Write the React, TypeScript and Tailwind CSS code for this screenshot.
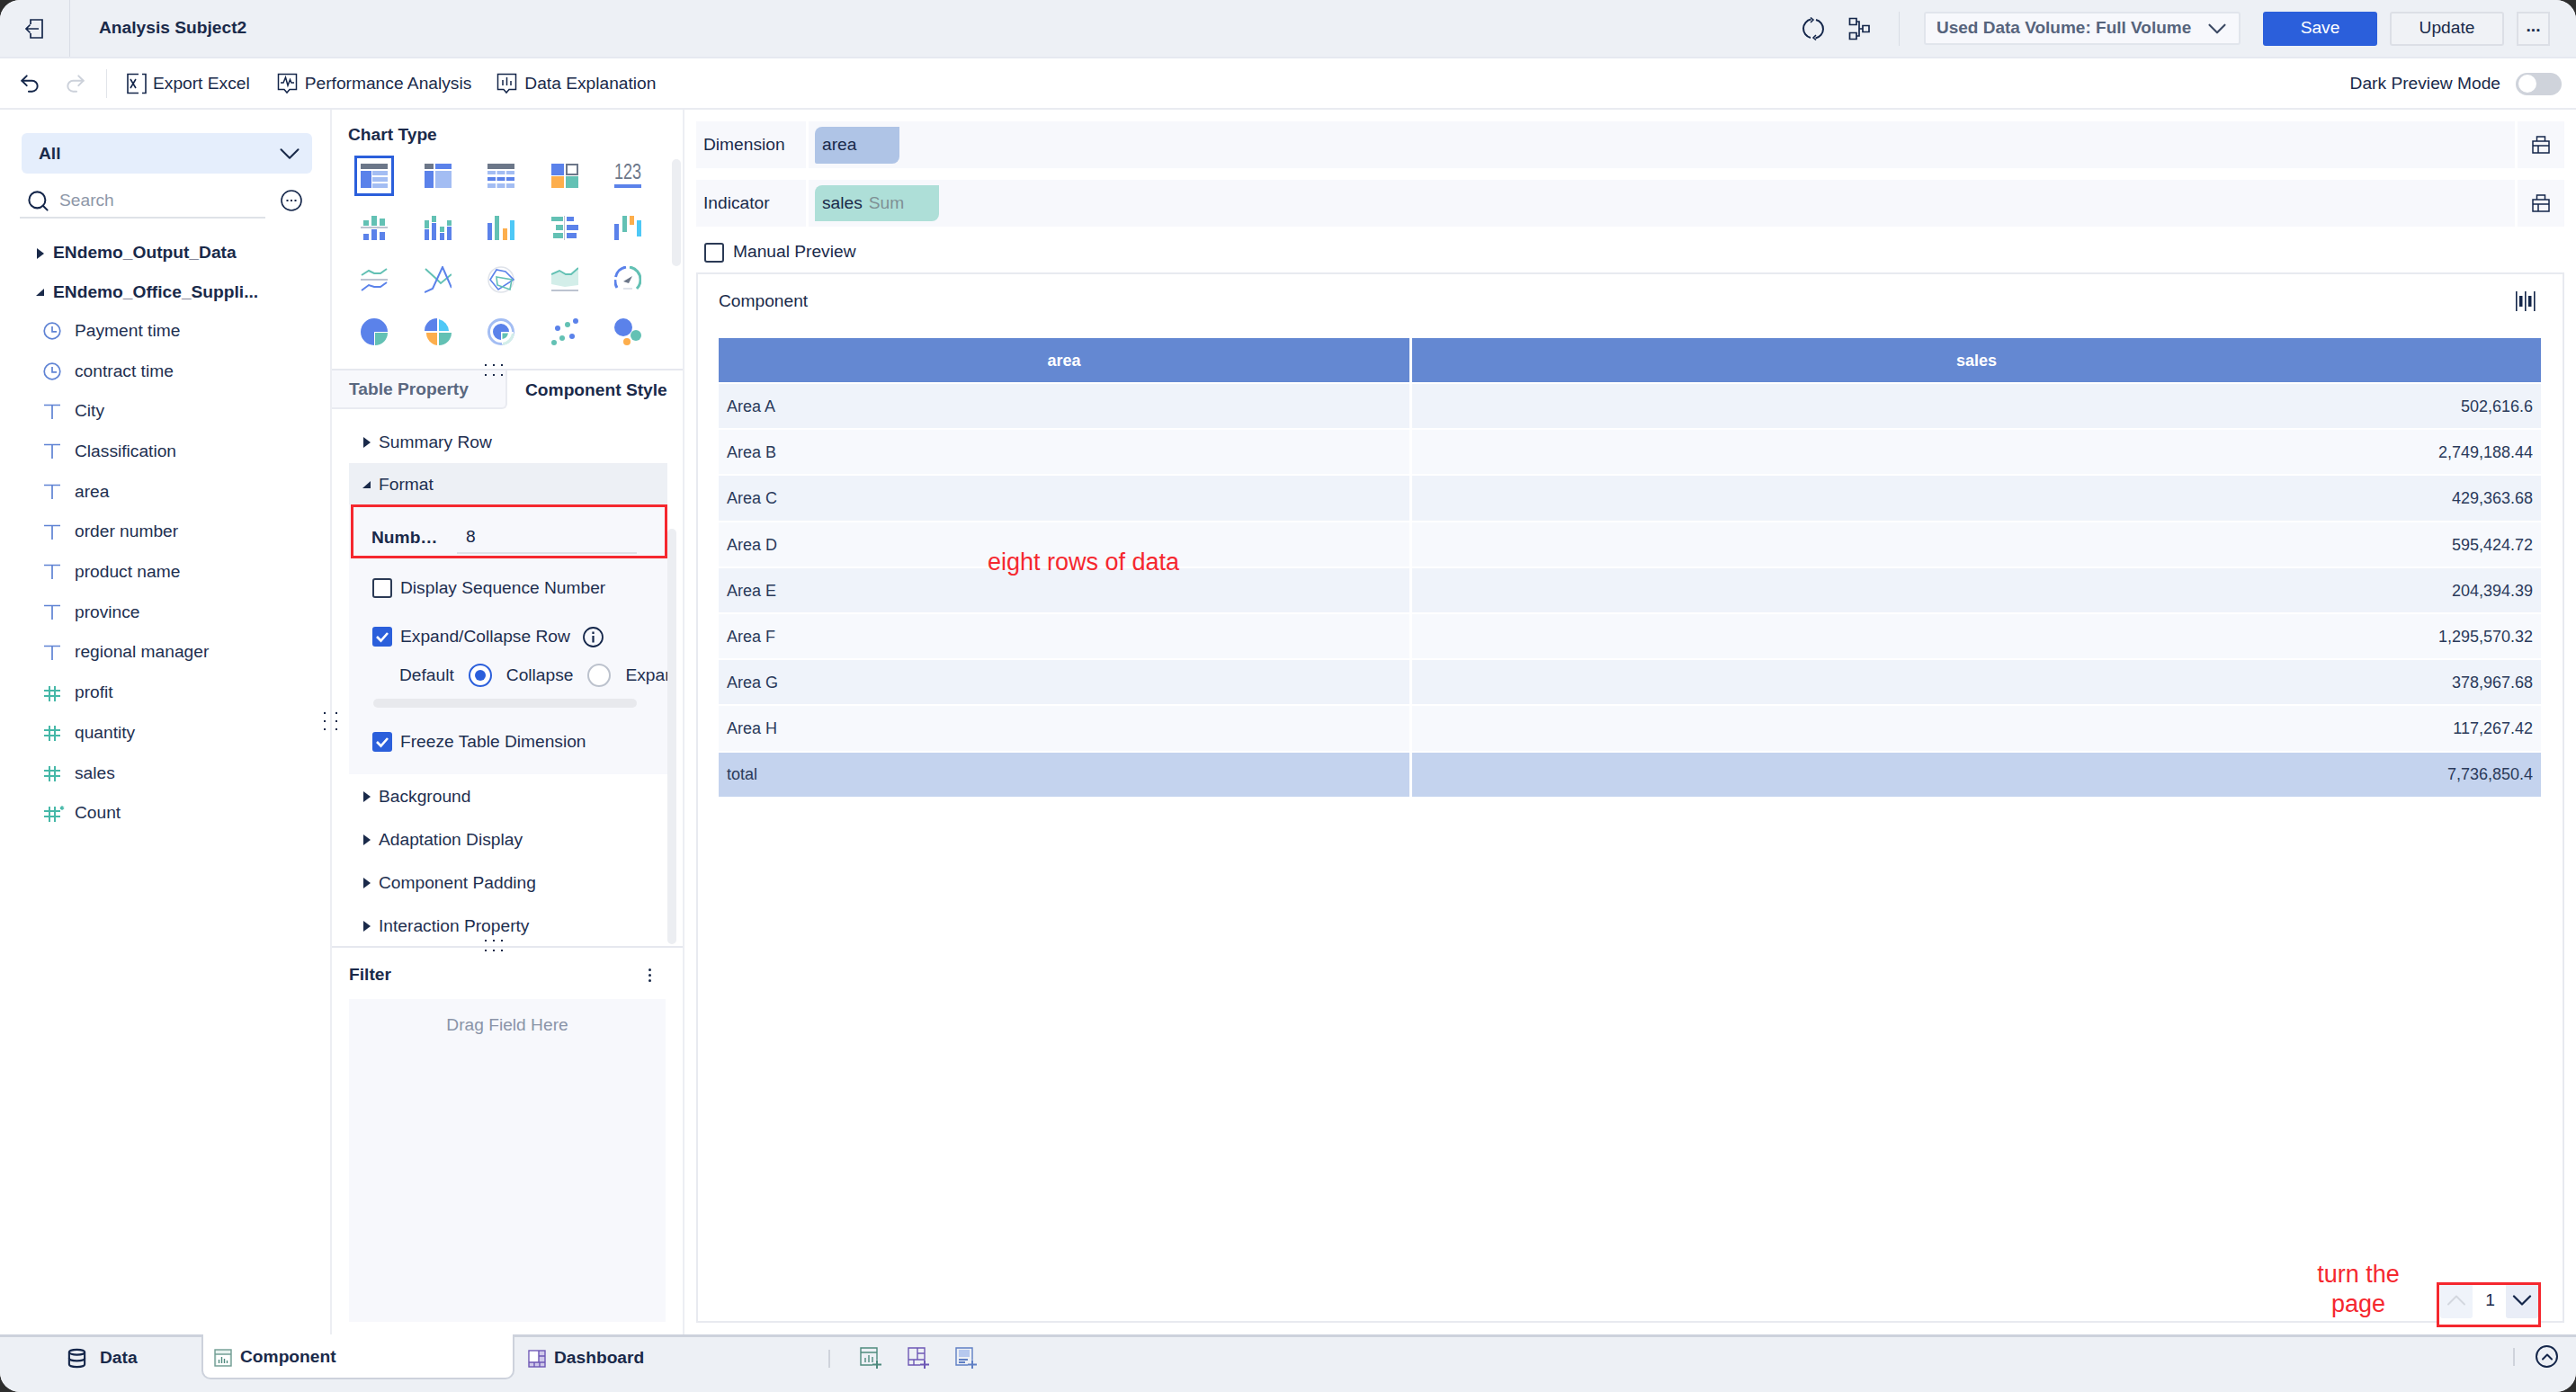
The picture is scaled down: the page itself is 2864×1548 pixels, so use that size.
import { ChevronDown, ChevronUp, Database, Search, Undo2, Redo2 } from "lucide-react";
import type { ReactNode } from "react";

const BLUE = "#5b82ea";
const LIGHT = "#a3bdf3";
const GREY = "#6c7789";
const TEAL = "#63c1b4";
const ORANGE = "#fdae4c";
const CYAN = "#4ec8f6";
const PALE = "#d3eee9";
const LINE = "#bcc3d0";

type R = [number, number, number, number, string];

function Bars({ rects }: { rects: R[] }) {
  return (
    <svg width="30" height="27" viewBox="0 0 30 27">
      {rects.map(([x, y, w, h, c], i) => (
        <rect key={i} x={x} y={y} width={w} height={h} fill={c} />
      ))}
    </svg>
  );
}

function Shape({ children }: { children: ReactNode }) {
  return (
    <svg width="30" height="30" viewBox="0 0 30 30" fill="none">
      {children}
    </svg>
  );
}

const chartIcons: ReactNode[] = [
  <Bars rects={[[0, 0, 30, 6, GREY], [0, 8, 12, 19, BLUE], [13, 8, 17, 5, LIGHT], [13, 15, 17, 5, LIGHT], [13, 22, 17, 5, LIGHT]]} />,
  <Bars rects={[[0, 0, 10, 6, GREY], [12, 0, 18, 6, BLUE], [0, 8, 10, 19, BLUE], [12, 8, 18, 19, LIGHT]]} />,
  <Bars rects={[[0, 0, 30, 6, GREY], [0, 8, 9, 4, LIGHT], [10.5, 8, 9, 4, LIGHT], [21, 8, 9, 4, LIGHT], [0, 15, 9, 4, BLUE], [10.5, 15, 9, 4, BLUE], [21, 15, 9, 4, BLUE], [0, 22, 9, 5, LIGHT], [10.5, 22, 9, 5, LIGHT], [21, 22, 9, 5, LIGHT]]} />,
  <svg width="30" height="27" viewBox="0 0 30 27">
    <rect width="14" height="13" fill={BLUE} />
    <rect x="17" y="1" width="12" height="11" fill="none" stroke={GREY} strokeWidth="2" />
    <rect y="14" width="14" height="13" fill={ORANGE} />
    <rect x="16" y="14" width="14" height="13" fill={TEAL} />
  </svg>,
  <svg width="30" height="27" viewBox="0 0 30 27">
    <text x="0" y="17" fontSize="23" textLength="30" lengthAdjust="spacingAndGlyphs" fontFamily="Liberation Sans, sans-serif" fill={GREY}>
      123
    </text>
    <rect y="23" width="30" height="4" fill={BLUE} />
  </svg>,
  <Bars rects={[[3, 5, 6, 6, TEAL], [12, 0, 6, 11, TEAL], [21, 3, 6, 8, TEAL], [0, 12, 30, 2, LINE], [3, 20, 6, 7, BLUE], [12, 15, 6, 12, BLUE], [21, 18, 6, 9, BLUE]]} />,
  <Bars rects={[[0, 5, 5, 9, TEAL], [0, 15, 5, 12, BLUE], [8, 0, 5, 7, TEAL], [8, 8, 5, 19, BLUE], [17, 12, 5, 6, TEAL], [17, 19, 5, 8, BLUE], [25, 5, 5, 6, TEAL], [25, 12, 5, 15, BLUE]]} />,
  <Bars rects={[[0, 8, 5, 19, BLUE], [8, 0, 5, 27, TEAL], [17, 14, 5, 13, ORANGE], [25, 5, 5, 22, CYAN]]} />,
  <Bars rects={[[0, 1, 13, 5, TEAL], [5, 10, 8, 6, TEAL], [2, 19, 11, 6, TEAL], [14, 0, 1, 27, LINE], [17, 1, 8, 5, BLUE], [17, 10, 13, 6, BLUE], [17, 19, 11, 6, BLUE]]} />,
  <Bars rects={[[0, 9, 5, 18, BLUE], [9, 0, 5, 18, TEAL], [17, 0, 5, 10, ORANGE], [25, 5, 5, 18, CYAN]]} />,
  <Shape>
    <path d="M1 10 L9 5 L15 8 L22 8 L29 3" stroke={TEAL} strokeWidth="2" />
    <rect y="14" width="30" height="2" fill={LINE} />
    <path d="M1 27 L9 21 L15 23 L22 23 L29 18" stroke={BLUE} strokeWidth="2" />
  </Shape>,
  <Shape>
    <path d="M1 3 L13 14 L18 19 L30 9" stroke={TEAL} strokeWidth="2" />
    <path d="M0 29 L9 25 L20 1 L30 24" stroke={BLUE} strokeWidth="2" />
  </Shape>,
  <Shape>
    <circle cx="15" cy="15" r="14" stroke="#dfe3ea" strokeWidth="1.5" />
    <path d="M3 15 L10 4 L20 6 L29 15 L12 26 Z" stroke={BLUE} strokeWidth="1.6" />
    <path d="M10 12 L27 15 L25 26 L11 21 Z" stroke={TEAL} strokeWidth="1.6" />
  </Shape>,
  <Shape>
    <path d="M0 9 L9 6 L15 9 L23 9 L30 2 V21 L15 23 L0 20 Z" fill={PALE} />
    <path d="M0 9 L9 5 L16 9 L22 9 L30 2" stroke={TEAL} strokeWidth="2" />
    <rect y="26" width="30" height="2" fill={LINE} />
  </Shape>,
  <Shape>
    <path d="M3 24 A14 14 0 0 1 1 15 M1.5 12 A14 14 0 0 1 13 1" stroke={BLUE} strokeWidth="3" />
    <path d="M17 1 A14 14 0 0 1 29 15 A14 14 0 0 1 25 25" stroke={TEAL} strokeWidth="3" />
    <path d="M10 17 L20 11 L16 19 Z" fill={GREY} />
    <rect x="10" y="24" width="10" height="2" fill="#dfe3ea" />
  </Shape>,
  <Shape>
    <path d="M15 15 V30 A15 15 0 1 1 30 15 Z" fill={BLUE} />
    <path d="M16 16 H30 A14 14 0 0 1 16 30 Z" fill={TEAL} />
  </Shape>,
  <Shape>
    <path d="M14 14 V0 A14 14 0 0 0 0 14 Z" fill={BLUE} />
    <path d="M16 14 V1 A14 14 0 0 1 27 14 Z" fill={CYAN} />
    <path d="M14 16 V30 A14 14 0 0 1 2 16 Z" fill={ORANGE} />
    <path d="M16 16 H30 A14 14 0 0 1 16 30 Z" fill={TEAL} />
  </Shape>,
  <Shape>
    <circle cx="15" cy="15" r="13.5" stroke={LIGHT} strokeWidth="3" />
    <path d="M16 15 H29 A14 14 0 0 1 16 29 Z" fill="#fff" />
    <path d="M17 28.5 A13.5 13.5 0 0 0 28.5 17" stroke={PALE} strokeWidth="3" />
    <path d="M15 15 V24 A9 9 0 1 1 24 15 Z" fill={BLUE} />
    <path d="M16.5 16.5 H23 A8 8 0 0 1 16.5 23 Z" fill={TEAL} />
  </Shape>,
  <Shape>
    <circle cx="27" cy="3" r="3" fill={BLUE} />
    <circle cx="18" cy="7" r="3" fill={TEAL} />
    <circle cx="7" cy="11" r="3" fill={BLUE} />
    <circle cx="23" cy="20" r="3" fill={BLUE} />
    <circle cx="12" cy="22" r="3" fill={TEAL} />
    <circle cx="3" cy="27" r="3" fill={TEAL} />
  </Shape>,
  <Shape>
    <circle cx="10" cy="10" r="10" fill={BLUE} />
    <circle cx="24" cy="19" r="6" fill={TEAL} />
    <circle cx="14" cy="26" r="4" fill={ORANGE} />
  </Shape>,
];

function Dots({ cols, rows, gap }: { cols: number; rows: number; gap: string }) {
  return (
    <div className={`grid ${gap} ${cols === 3 ? "grid-cols-3" : "grid-cols-2"}`}>
      {Array.from({ length: cols * rows }).map((_, i) => (
        <span key={i} className="h-[2px] w-[2px] bg-[#1a2a4a]" />
      ))}
    </div>
  );
}

function Clock() {
  return (
    <svg width="20" height="20" viewBox="0 0 20 20" fill="none" stroke="#5f83d4" strokeWidth="1.7">
      <circle cx="10" cy="10" r="8.8" />
      <path d="M10 5 V10.8 H15" />
    </svg>
  );
}

function TextType() {
  return (
    <svg width="20" height="20" viewBox="0 0 20 20" fill="none" stroke="#5f83d4" strokeWidth="1.7">
      <path d="M1 2.5 H19 M10 2.5 V18" />
    </svg>
  );
}

function Hash({ star }: { star?: boolean }) {
  return (
    <svg width="24" height="20" viewBox="0 0 24 20" fill="none" stroke="#46b8a8" strokeWidth="2">
      <path d="M1 7 H19 M1 13 H19 M7 2 V19 M13 2 V19" />
      {star && <path d="M21 1 V6 M18.8 2.5 L23.2 4.5 M23.2 2.5 L18.8 4.5" strokeWidth="1.2" />}
    </svg>
  );
}

const fields: { name: string; icon: ReactNode }[] = [
  { name: "Payment time", icon: <Clock /> },
  { name: "contract time", icon: <Clock /> },
  { name: "City", icon: <TextType /> },
  { name: "Classification", icon: <TextType /> },
  { name: "area", icon: <TextType /> },
  { name: "order number", icon: <TextType /> },
  { name: "product name", icon: <TextType /> },
  { name: "province", icon: <TextType /> },
  { name: "regional manager", icon: <TextType /> },
  { name: "profit", icon: <Hash /> },
  { name: "quantity", icon: <Hash /> },
  { name: "sales", icon: <Hash /> },
  { name: "Count", icon: <Hash star /> },
];

const rows = [
  ["Area A", "502,616.6"],
  ["Area B", "2,749,188.44"],
  ["Area C", "429,363.68"],
  ["Area D", "595,424.72"],
  ["Area E", "204,394.39"],
  ["Area F", "1,295,570.32"],
  ["Area G", "378,967.68"],
  ["Area H", "117,267.42"],
];

function Caret({ open }: { open?: boolean }) {
  return (
    <svg width="9" height="12" viewBox="0 0 9 12" className="shrink-0" fill="#1a2a4a">
      {open ? <path d="M0 10 H9 V2 Z" /> : <path d="M1 0 L9 6 L1 12 Z" />}
    </svg>
  );
}

function Section({ label, open }: { label: string; open?: boolean }) {
  return (
    <div className="flex h-[48px] items-center gap-[9px] pl-[15px] pt-[2px] text-[19.2px] text-[#1e2f50]">
      <Caret open={open} />
      <span>{label}</span>
    </div>
  );
}

function Check({ on }: { on?: boolean }) {
  if (!on)
    return <span className="h-[22px] w-[22px] shrink-0 rounded-[3px] border-2 border-[#2b3a55] bg-white" />;
  return (
    <span className="flex h-[22px] w-[22px] shrink-0 items-center justify-center rounded-[3px] bg-[#2b5fdb]">
      <svg width="16" height="14" viewBox="0 0 16 14" fill="none" stroke="#fff" strokeWidth="2.6">
        <path d="M2 7 L6.5 11.5 L14 3" />
      </svg>
    </span>
  );
}

function Brush() {
  return (
    <svg width="20" height="20" viewBox="0 0 20 20" fill="none" stroke="#14264a" strokeWidth="1.5">
      <path d="M5.5 6 V1 H14.5 V6 M1 6 H19 V19 H1 Z M1 11 H19 M7 11 V19" />
    </svg>
  );
}

function FieldRow({ label, children }: { label: string; children: ReactNode }) {
  return (
    <div className="flex h-[52px] bg-[#f7f8fc]">
      <div className="flex w-[122px] items-center pl-[8px] text-[19.2px] text-[#1a2a4a]">{label}</div>
      <div className="w-[3px] bg-white" />
      <div className="flex flex-1 items-center pl-[7px]">{children}</div>
      <div className="w-[3px] bg-white" />
      <div className="flex w-[52px] items-center justify-center">
        <Brush />
      </div>
    </div>
  );
}

function StrokeIcon({ children, w = 24, h = 24 }: { children: ReactNode; w?: number; h?: number }) {
  return (
    <svg width={w} height={h} viewBox={`0 0 ${w} ${h}`} fill="none" stroke="#14264a" strokeWidth="1.7" className="shrink-0">
      {children}
    </svg>
  );
}

export default function App() {
  return (
    <div className="h-[1548px] w-[2864px] overflow-hidden bg-[#2e2e2e] font-['Liberation_Sans',Arial,sans-serif]">
      <div className="relative flex h-full flex-col overflow-hidden rounded-[22px] bg-white text-[#1a2a4a]">
        {/* top bar */}
        <header className="flex h-[65px] shrink-0 items-center border-b-2 border-[#e6e9f0] bg-[#edf0f5]">
          <div className="flex h-full w-[78px] items-center justify-center border-r border-[#d9dde5] pr-[1px]">
            <StrokeIcon w={24} h={24}>
              <path d="M8 7 V2 H21 V22 H8 V17 M17 12 H3 M7.5 7.5 L3 12 L7.5 16.5" />
            </StrokeIcon>
          </div>
          <div className="pl-[32px] text-[19.2px] font-bold">Analysis Subject2</div>
          <div className="ml-auto flex items-center pr-[29px]">
            <StrokeIcon w={26} h={26}>
              <path d="M10.5 2.5 A10.5 10.5 0 0 0 10 23 M15.5 23.5 A10.5 10.5 0 0 0 16 3" strokeWidth="2" />
              <path d="M10 0.5 L13 3 L10 6 M16 25.5 L13 23 L16 20" strokeWidth="1.5" />
            </StrokeIcon>
            <span className="ml-[26px]">
              <StrokeIcon w={24} h={26}>
                <path d="M1.5 1.5 H9 V8.5 H1.5 Z M1.5 17.5 H9 V24.5 H1.5 Z M16 9.5 H23 V16.5 H16 Z M9 5 H12 V21 H9 M12 13 H16" />
              </StrokeIcon>
            </span>
            <span className="ml-[32px] h-[38px] w-px bg-[#d9dde5]" />
            <div className="ml-[27px] flex h-[37px] w-[352px] items-center justify-between rounded-[3px] border-2 border-[#e1e5ec] bg-[#f7f8fc] pl-[12px] pr-[7px] text-[19px] font-bold text-[#56647c]">
              <span>Used Data Volume: Full Volume</span>
              <ChevronDown size={34} strokeWidth={1.5} className="text-[#3c4a64]" />
            </div>
            <button className="ml-[25px] h-[38px] w-[127px] rounded-[3px] bg-[#2b5fdb] text-[19.2px] text-white">Save</button>
            <button className="ml-[14px] h-[38px] w-[127px] rounded-[3px] border-2 border-[#dcdfe6] bg-[#f0f2f6] text-[19.2px]">Update</button>
            <button className="ml-[14px] h-[38px] w-[37px] border-2 border-[#dcdfe6] bg-[#f0f2f6] pb-[8px] text-[19.2px] font-bold">...</button>
          </div>
        </header>

        {/* toolbar */}
        <div className="flex h-[57px] shrink-0 items-center border-b-2 border-[#e9ebf1] pt-[1px] text-[19.2px]">
          <Undo2 size={26} strokeWidth={1.8} className="ml-[20px] text-[#14264a]" />
          <Redo2 size={26} strokeWidth={1.8} className="ml-[25px] text-[#ccd1da]" />
          <span className="ml-[21px] h-[32px] w-px bg-[#e1e4ea]" />
          <span className="ml-[21px]">
            <StrokeIcon w={23} h={24}>
              <path d="M14 1.5 H2 V22.5 H14 M18 1.5 H22 V22.5 H18 M5 7 L11 17 M11 7 L5 17" strokeWidth="1.6" />
            </StrokeIcon>
          </span>
          <span className="ml-[7px]">Export Excel</span>
          <span className="ml-[30px]">
            <StrokeIcon w={23} h={24}>
              <path d="M1.5 1.5 H21.5 V18.5 H14 L11 22 L8 18.5 H1.5 Z M4 11 H7 L9.5 5 L12 14 L14.5 7.5 L16 11 H19" strokeWidth="1.5" />
            </StrokeIcon>
          </span>
          <span className="ml-[8px]">Performance Analysis</span>
          <span className="ml-[28px]">
            <StrokeIcon w={23} h={24}>
              <path d="M1.5 1.5 H21.5 V18.5 H14 L11 22 L8 18.5 H1.5 Z M7 8 V14 M11.5 5 V14 M16 9 V14" strokeWidth="1.5" />
            </StrokeIcon>
          </span>
          <span className="ml-[8px]">Data Explanation</span>
          <span className="ml-auto">Dark Preview Mode</span>
          <span className="ml-[17px] mr-[16px] flex h-[25px] w-[51px] items-center rounded-full bg-[#cfd3db] pl-[3px]">
            <span className="h-[20px] w-[20px] rounded-full bg-white" />
          </span>
        </div>

        {/* body */}
        <div className="flex min-h-0 flex-1">
          {/* field list */}
          <aside className="relative w-[369px] shrink-0 border-r-2 border-[#eceef3] pl-[24px] pr-[20px] pt-[26px]">
            <div className="flex h-[45px] items-center justify-between rounded-[6px] bg-[#e5eefc] pl-[19px] pr-[6px] pt-[1px] text-[19.2px] font-bold">
              <span>All</span>
              <ChevronDown size={38} strokeWidth={1.3} />
            </div>
            <div className="mt-[10px] flex items-center">
              <div className="flex h-[40px] w-[273px] -translate-x-[2px] items-center gap-[10px] border-b-2 border-[#dfe2e8] pl-[7px] pt-[2px] text-[19.2px] text-[#8e97a8]">
                <Search size={27} strokeWidth={1.8} className="text-[#14264a]" />
                <span>Search</span>
              </div>
              <svg width="24" height="24" viewBox="0 0 24 24" fill="none" stroke="#14264a" strokeWidth="1.6" className="ml-[15px]">
                <circle cx="12" cy="12" r="11" />
                <path d="M6.5 12 H8.5 M11 12 H13 M15.5 12 H17.5" strokeWidth="2" />
              </svg>
            </div>
            <div className="mt-[16px] flex h-[45px] items-center gap-[10px] pl-[16px] text-[19.2px] font-bold">
              <Caret />
              <span>ENdemo_Output_Data</span>
            </div>
            <div className="flex h-[42px] items-center gap-[10px] pl-[16px] text-[19.2px] font-bold">
              <Caret open />
              <span>ENdemo_Office_Suppli...</span>
            </div>
            {fields.map((f) => (
              <div key={f.name} className="flex h-[44.7px] items-center text-[19.2px] text-[#1e2f50]">
                <span className="flex w-[59px] shrink-0 pl-[24px]">{f.icon}</span>
                <span>{f.name}</span>
              </div>
            ))}
            <div className="absolute right-[-8px] top-[670px]">
              <Dots cols={2} rows={3} gap="gap-x-[11px] gap-y-[7px]" />
            </div>
          </aside>

          {/* chart and style panel */}
          <section className="flex w-[392px] shrink-0 flex-col border-r-2 border-[#eceef3]">
            <div className="relative flex h-[290px] shrink-0 border-b-2 border-[#e6e8ef]">
              <div className="w-[378px] pl-[12px] pt-[14px]">
                <div className="h-[28px] pl-[6px] text-[19.2px] font-bold leading-[28px]">Chart Type</div>
                <div className="mt-[3px] grid grid-cols-[repeat(5,70.5px)] auto-rows-[57.7px]">
                  {chartIcons.map((icon, i) => (
                    <div key={i} className="flex items-center justify-center">
                      {i === 0 ? (
                        <div className="flex h-[45px] w-[44px] items-center justify-center border-[3px] border-[#2b5fdb]">{icon}</div>
                      ) : (
                        icon
                      )}
                    </div>
                  ))}
                </div>
              </div>
              <div className="mt-[55px] h-[119px] w-[10px] rounded-full bg-[#eceef2]" />
              <div className="absolute left-[170px] bottom-[-8px]">
                <Dots cols={3} rows={2} gap="gap-x-[7px] gap-y-[9px]" />
              </div>
            </div>

            <div className="flex h-[43px] shrink-0 text-[19.2px] font-bold">
              <div className="flex w-[195px] items-center rounded-br-[6px] border-b-2 border-r-2 border-[#e9ebf1] bg-[#f7f8fc] pl-[19px] pt-[2px] text-[#5a6880]">Table Property</div>
              <div className="flex flex-1 items-center pl-[20px] pt-[1px]">Component Style</div>
            </div>

            <div className="flex h-[599px] shrink-0 border-b-2 border-[#e6e8ef]">
              <div className="w-[373px] overflow-hidden pl-[19px]">
                <div className="mt-[12px]">
                  <Section label="Summary Row" />
                </div>
                <div className="w-[354px] bg-[#f7f8fc]">
                  <div className="flex h-[46px] items-center gap-[9px] bg-[#edf0f5] pl-[15px] pt-[2px] text-[19.2px] text-[#1e2f50]">
                    <Caret open />
                    <span>Format</span>
                  </div>
                  <div className="ml-[2px] flex h-[60px] items-center border-[3px] border-[#f5282f] pl-[20px] pt-[14px] text-[19.2px]">
                    <span className="w-[95px] font-bold">Numb…</span>
                    <div className="flex h-[35px] w-[200px] items-center border-b-2 border-[#dfe2e8] pl-[10px]">8</div>
                  </div>
                  <div className="pt-[6px] text-[19.2px] text-[#1e2f50]">
                    <div className="flex h-[54px] items-center gap-[9px] pl-[26px]">
                      <Check />
                      <span>Display Sequence Number</span>
                    </div>
                    <div className="flex h-[54px] items-center gap-[9px] pl-[26px]">
                      <Check on />
                      <span>Expand/Collapse Row</span>
                      <svg width="23" height="23" viewBox="0 0 23 23" fill="none" stroke="#14264a" strokeWidth="1.8" className="ml-[5px]">
                        <circle cx="11.5" cy="11.5" r="10.5" />
                        <path d="M11.5 10 V17.5 M11.5 5.5 V8" strokeWidth="2.2" />
                      </svg>
                    </div>
                    <div className="flex h-[32px] items-center overflow-hidden whitespace-nowrap pl-[56px]">
                      <span>Default</span>
                      <span className="ml-[16px] flex h-[26px] w-[26px] shrink-0 items-center justify-center rounded-full border-2 border-[#2b5fdb] bg-white">
                        <span className="h-[12px] w-[12px] rounded-full bg-[#2b5fdb]" />
                      </span>
                      <span className="ml-[16px]">Collapse</span>
                      <span className="ml-[16px] h-[26px] w-[26px] shrink-0 rounded-full border-2 border-[#bcc2cd] bg-white" />
                      <span className="ml-[16px]">Expand</span>
                    </div>
                    <div className="ml-[27px] mt-[10px] h-[10px] w-[293px] rounded-full bg-[#e8e9ed]" />
                    <div className="mt-[11px] flex h-[54px] items-center gap-[9px] pl-[26px]">
                      <Check on />
                      <span>Freeze Table Dimension</span>
                    </div>
                    <div className="h-[9px]" />
                  </div>
                </div>
                <Section label="Background" />
                <Section label="Adaptation Display" />
                <Section label="Component Padding" />
                <Section label="Interaction Property" />
              </div>
              <div className="mt-[133px] h-[462px] w-[10px] rounded-full bg-[#eceef2]" />
            </div>

            <div className="relative flex-1 px-[19px]">
              <div className="absolute left-[170px] top-[-9px]">
                <Dots cols={3} rows={2} gap="gap-x-[7px] gap-y-[9px]" />
              </div>
              <div className="flex h-[57px] items-center justify-between pr-[16px] pt-[3px] text-[19.2px] font-bold">
                <span>Filter</span>
                <span className="flex flex-col gap-[3px]">
                  <span className="h-[3px] w-[3px] rounded-full bg-[#1a2a4a]" />
                  <span className="h-[3px] w-[3px] rounded-full bg-[#1a2a4a]" />
                  <span className="h-[3px] w-[3px] rounded-full bg-[#1a2a4a]" />
                </span>
              </div>
              <div className="flex h-[359px] justify-center bg-[#f7f8fc] pt-[15px] text-[19.2px] text-[#8a94a8]">Drag Field Here</div>
            </div>
          </section>

          {/* preview */}
          <main className="flex min-w-0 flex-1 flex-col px-[13px] pb-[13px] pt-[13px]">
            <FieldRow label="Dimension">
              <div className="flex h-[41px] w-[94px] items-center rounded-bl-[2px] rounded-br-[8px] rounded-tl-[8px] bg-[#afc4e6] pl-[8px] text-[19.2px]">area</div>
            </FieldRow>
            <div className="mt-[13px]">
              <FieldRow label="Indicator">
                <div className="flex h-[40px] w-[138px] items-center gap-[7px] rounded-br-[8px] rounded-tl-[8px] bg-[#aedfd8] pl-[8px] text-[19.2px]">
                  <span>sales</span>
                  <span className="text-[#7f9095]">Sum</span>
                </div>
              </FieldRow>
            </div>
            <div className="flex h-[51px] items-center gap-[10px] pl-[9px] pt-[6px] text-[19.2px]">
              <Check />
              <span>Manual Preview</span>
            </div>
            <div className="flex min-h-0 flex-1 flex-col border-2 border-[#e8eaf0] pl-[23px] pr-[24px]">
              <div className="flex h-[71px] shrink-0 items-center justify-between pb-[11px] text-[19.2px]">
                <span>Component</span>
                <svg width="22" height="22" viewBox="0 0 22 22" fill="#14264a" className="mr-[6px]">
                  <rect x="0" y="0" width="1.6" height="22" />
                  <rect x="4" y="5" width="3.5" height="12" />
                  <rect x="10" y="0" width="1.6" height="22" />
                  <rect x="14" y="5" width="3.5" height="12" />
                  <rect x="20" y="0" width="1.6" height="22" />
                </svg>
              </div>
              <div className="text-[18px]">
                <div className="grid h-[49px] grid-cols-[771px_1fr] bg-[#6488d2] pt-[2px] font-bold text-white">
                  <div className="-mt-[2px] flex items-center justify-center border-r-[3px] border-white pt-[2px]">area</div>
                  <div className="flex items-center justify-center">sales</div>
                </div>
                {rows.map(([name, value], i) => (
                  <div
                    key={name}
                    className={`grid h-[51.2px] grid-cols-[771px_1fr] border-t-2 border-white text-[#2a3a5a] ${i % 2 === 0 ? "bg-[#eff3fa]" : "bg-[#f7f9fd]"}`}
                  >
                    <div className="flex items-center border-r-[3px] border-white pl-[9px] pt-[2px]">{name}</div>
                    <div className="flex items-center justify-end pr-[9px] pt-[2px]">{value}</div>
                  </div>
                ))}
                <div className="grid h-[51.2px] grid-cols-[771px_1fr] border-t-2 border-white bg-[#c4d3ee] text-[#2a3a5a]">
                  <div className="flex items-center border-r-[3px] border-white pl-[9px] pt-[1px]">total</div>
                  <div className="flex items-center justify-end pr-[9px] pt-[1px]">7,736,850.4</div>
                </div>
              </div>
            </div>
          </main>
        </div>

        {/* bottom tabs */}
        <footer className="flex h-[64px] shrink-0 items-start border-t-[3px] border-[#cdd2dc] bg-[#edf0f5] text-[19.2px] font-bold">
          <div className="flex h-[47px] w-[224px] items-center gap-[14px] pl-[74px]">
            <Database size={23} strokeWidth={2.2} className="text-[#14264a]" />
            <span>Data</span>
          </div>
          <div className="flex h-[50px] w-[348px] -translate-y-[3px] items-center gap-[9px] rounded-b-[10px] border-x-2 border-b-2 border-[#cdd2dc] bg-white pl-[12px] pt-[3px]">
            <svg width="20" height="20" viewBox="0 0 20 20" fill="none" stroke="#6f9c92" strokeWidth="1.4">
              <rect x="1" y="1" width="18" height="18" fill="#e6f2ef" />
              <path d="M1 6 H19" />
              <rect x="3" y="7" width="14" height="11" fill="#fff" stroke="none" />
              <path d="M5.5 16 V12 M8.5 16 V9 M11.5 16 V11 M14.5 16 V13" stroke="#4f8a7e" />
            </svg>
            <span>Component</span>
          </div>
          <div className="flex h-[47px] w-[349px] items-center gap-[9px] pl-[15px]">
            <svg width="20" height="20" viewBox="0 0 20 20" fill="none" stroke="#6d57b5" strokeWidth="1.4">
              <rect x="1" y="1" width="18" height="18" fill="#cfc8ea" />
              <rect x="1.8" y="1.8" width="10" height="12" fill="#fff" stroke="none" />
              <path d="M12 1 V14 M12 7 H19 M1 14 H19 M7 14 V19 M13 14 V19" />
            </svg>
            <span>Dashboard</span>
          </div>
          <span className="mt-[14px] h-[20px] w-[2px] bg-[#cfd3db]" />
          <div className="ml-[33px] mt-[11px] flex items-center gap-[29px]">
            <svg width="24" height="24" viewBox="0 0 24 24" fill="none" stroke="#4f8a7e" strokeWidth="1.4">
              <path d="M14 20 H1 V1 H19 V14 M1 6 H19 M6 17 V12 M10 17 V9 M14 17 V11" />
              <path d="M14 19.5 H24 M19 14.5 V24" strokeWidth="2" />
            </svg>
            <svg width="24" height="24" viewBox="0 0 24 24" fill="none" stroke="#6d57b5" strokeWidth="1.4">
              <path d="M14 20 H1 V1 H19 V14 M11 1 V14 M11 7 H19 M1 14 H19 M7 14 V20" />
              <path d="M14 19.5 H24 M19 14.5 V24" strokeWidth="2" />
            </svg>
            <svg width="24" height="24" viewBox="0 0 24 24" fill="none" stroke="#5f7fc4" strokeWidth="1.4">
              <path d="M14 20 H1 V1 H19 V14" />
              <rect x="4" y="3" width="12" height="8" fill="#b6c8ee" stroke="none" />
              <path d="M4 14 H14 M4 17 H11" strokeWidth="1.8" />
              <path d="M14 19.5 H24 M19 14.5 V24" strokeWidth="2" />
            </svg>
          </div>
          <div className="ml-auto mr-[20px] mt-[9px] flex items-center gap-[23px]">
            <span className="h-[20px] w-[2px] bg-[#cfd3db]" />
            <span className="flex h-[25px] w-[25px] items-center justify-center rounded-full border-2 border-[#14264a]">
              <ChevronUp size={20} strokeWidth={2.4} className="text-[#14264a]" />
            </span>
          </div>
        </footer>

        {/* red annotations over the page */}
        <div className="absolute left-[1098px] top-[608px] text-[27px] leading-[34px] text-[#f5282f]">eight rows of data</div>
        <div className="absolute left-[2560px] top-[1401px] w-[124px] text-center text-[27px] leading-[33px] text-[#f5282f]">
          turn the page
        </div>
        <div className="absolute left-[2709px] top-[1426px] flex h-[50px] w-[116px] items-start border-[3px] border-[#f5282f] bg-white pl-[1px]">
          <span className="flex h-[37px] w-[36px] items-center justify-center rounded-b-[3px] bg-[#eff3fa] pb-[3px]">
            <ChevronUp size={36} strokeWidth={1.3} className="text-[#d3d7df]" />
          </span>
          <span className="flex h-[37px] flex-1 items-center justify-center pb-[3px] pl-[2px] text-[19.2px]">1</span>
          <span className="flex h-[37px] w-[36px] items-center justify-center rounded-b-[3px] bg-[#e9edf7] pb-[3px]">
            <ChevronDown size={36} strokeWidth={1.5} className="text-[#14264a]" />
          </span>
        </div>
      </div>
    </div>
  );
}
